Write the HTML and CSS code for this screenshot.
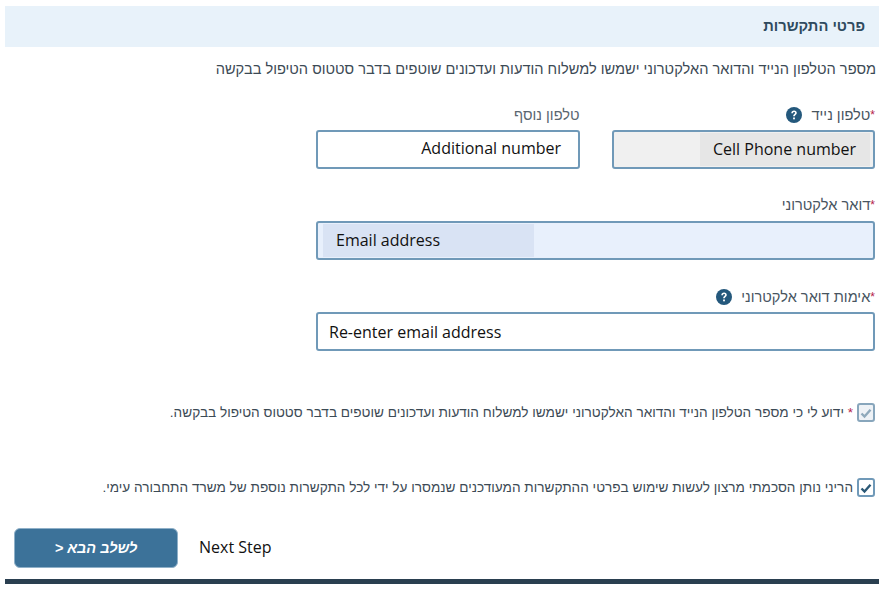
FILE: index.html
```html
<!DOCTYPE html>
<html lang="he" dir="rtl">
<head>
<meta charset="utf-8">
<title>פרטי התקשרות</title>
<link rel="stylesheet" href="styles.css">
</head>
<body>
<main class="page">
  <h2 class="section-head">פרטי התקשרות</h2>
  <p class="intro">מספר הטלפון הנייד והדואר האלקטרוני ישמשו למשלוח הודעות ועדכונים שוטפים בדבר סטטוס הטיפול בבקשה</p>

  <div class="form">
    <div class="row-two">
      <div class="field">
        <label class="label"><span class="req">*</span><span>טלפון נייד</span><svg class="help" viewBox="0 0 16 16"><circle cx="8" cy="8" r="8" fill="#24587c"/><path d="M5.300 6.200c0-1.600 1.200-2.600 2.800-2.600s2.700 1 2.700 2.300c0 1.900-2 1.900-2 3.400H7.100c0-2.300 2-2.300 2-3.300 0-.5-.4-.9-1-.9s-1.100.4-1.100 1.100z" fill="#fff"/><rect x="7.100" y="10.500" width="1.800" height="1.800" fill="#fff"/></svg></label>
        <div class="input input-grey"><span class="fill fill-grey" dir="ltr">Cell Phone number</span></div>
      </div>
      <div class="field">
        <label class="label label-plain">טלפון נוסף</label>
        <div class="input"><span class="fill fill-plain" dir="ltr">Additional number</span></div>
      </div>
    </div>

    <div class="field field-email">
      <label class="label"><span class="req">*</span><span>דואר אלקטרוני</span></label>
      <div class="input input-blue"><span class="fill fill-blue" dir="ltr">Email address</span></div>
    </div>

    <div class="field field-confirm">
      <label class="label"><span class="req">*</span><span>אימות דואר אלקטרוני</span><svg class="help" viewBox="0 0 16 16"><circle cx="8" cy="8" r="8" fill="#24587c"/><path d="M5.300 6.200c0-1.600 1.200-2.600 2.800-2.600s2.700 1 2.700 2.300c0 1.900-2 1.900-2 3.400H7.100c0-2.300 2-2.300 2-3.300 0-.5-.4-.9-1-.9s-1.100.4-1.100 1.100z" fill="#fff"/><rect x="7.100" y="10.500" width="1.800" height="1.800" fill="#fff"/></svg></label>
      <div class="input"><span class="fill fill-left" dir="ltr">Re-enter email address</span></div>
    </div>
  </div>

  <div class="check check-first">
    <span class="box box-muted"><svg viewBox="0 0 12 12"><path d="M1.500 6.500 4.500 9.500 10.500 2.800" fill="none" stroke="#8fa9bb" stroke-width="2.400"/></svg></span>
    <span class="check-text"><span class="req-soft">*</span> ידוע לי כי מספר הטלפון הנייד והדואר האלקטרוני ישמשו למשלוח הודעות ועדכונים שוטפים בדבר סטטוס הטיפול בבקשה.</span>
  </div>
  <div class="check check-second">
    <span class="box"><svg viewBox="0 0 12 12"><path d="M1.500 6.500 4.500 9.500 10.500 2.800" fill="none" stroke="#2b5876" stroke-width="2.400"/></svg></span>
    <span class="check-text">הריני נותן הסכמתי מרצון לעשות שימוש בפרטי ההתקשרות המעודכנים שנמסרו על ידי לכל התקשרות נוספת של משרד התחבורה עימי.</span>
  </div>

  <div class="actions">
    <span class="next-en" dir="ltr">Next Step</span>
    <button class="next-btn" type="button">לשלב הבא &lt;</button>
  </div>
  <div class="footer-bar"></div>
</main>
</body>
</html>
```
FILE: styles.css
```css
* { box-sizing: border-box; }
html, body { margin: 0; padding: 0; background: #fff; }
body {
  font-family: "Liberation Sans", Arial, sans-serif;
  color: #3c4a55;
  width: 886px;
  height: 589px;
  overflow: hidden;
}
.page { width: 874px; margin: 6px 7px 0 5px; }
.section-head {
  margin: 0;
  height: 41px;
  background: #e8f2fa;
  color: #2f4a5e;
  font-size: 14.700px;
  font-weight: bold;
  line-height: 40px;
  padding-right: 14px;
}
.intro {
  margin: 13px 0 0;
  padding-right: 3px;
  font-size: 14.600px;
  line-height: 18px;
  color: #3c4a55;
}
.form { margin: 0; padding: 0 4px 0 311px; }
.row-two { display: flex; gap: 32px; margin-top: 28px; }
.row-two .field { flex: 1 1 0; }
.label {
  display: flex;
  align-items: center;
  height: 18px;
  font-size: 14.600px;
  line-height: 18px;
  color: #48555f;
  white-space: nowrap;
}
.label-plain { color: #5a6670; }
.req { color: #b5224a; font-size: 12px; }
.help { width: 16px; height: 16px; margin-right: 9px; }
.input {
  display: flex;
  align-items: stretch;
  height: 39px;
  margin-top: 6px;
  padding: 1px 0;
  border: 2px solid #7099b8;
  border-radius: 3px;
  background: #fff;
  font-family: "Open Sans", "Noto Sans", sans-serif;
  font-size: 16px;
  color: #111;
}
.input-grey { background: #f0f0f0; }
.input-blue { background: #e8f0fc; }
.fill { display: flex; align-items: center; white-space: nowrap; }
.fill-grey { background: #e6e6e6; width: 170px; margin-right: 3px; padding-left: 13px; padding-bottom: 2px; }
.fill-plain { margin-right: 16.500px; padding-bottom: 4px; }
.fill-blue { background: #d9e3f4; width: 211px; margin-right: auto; margin-left: 5px; padding-left: 13px; padding-bottom: 2px; }
.fill-left { margin-right: auto; margin-left: 11px; }
.field-email { margin-top: 27px; }
.field-email .input { margin-top: 7px; }
.field-confirm { margin-top: 28px; }
.field-confirm .input { margin-top: 6px; }
.check { display: flex; align-items: center; padding-right: 4px; font-size: 13.600px; color: #3c4a55; }
.check-first { margin-top: 52px; }
.check-second { margin-top: 56px; }
.box {
  flex: none;
  display: flex;
  align-items: center;
  justify-content: center;
  width: 18px;
  height: 19px;
  border: 2px solid #7099b8;
  border-radius: 3px;
  background: #fff;
  margin-left: 4px;
}
.box svg { width: 12px; height: 12px; }
.box-muted { background: #eef2f6; border-color: #88a6bc; }
.req-soft { color: #b5224a; }
.check-text { white-space: nowrap; line-height: 18px; }
.actions {
  display: flex;
  flex-direction: row;
  justify-content: flex-end;
  align-items: center;
  gap: 21px;
  margin-top: 31px;
  padding-left: 9px;
}
.next-en { font-family: "Open Sans", "Noto Sans", sans-serif; font-size: 16px; color: #111; padding-bottom: 2px; }
.next-btn {
  width: 164px;
  height: 40px;
  border: 1px solid #8fb0c8;
  border-radius: 6px;
  background: #3c7299;
  color: #fff;
  font-family: "Liberation Sans", Arial, sans-serif;
  font-size: 14.500px;
  font-weight: bold;
  font-style: italic;
}
.footer-bar { height: 5px; margin-top: 11px; background: #2a3f50; }
```
